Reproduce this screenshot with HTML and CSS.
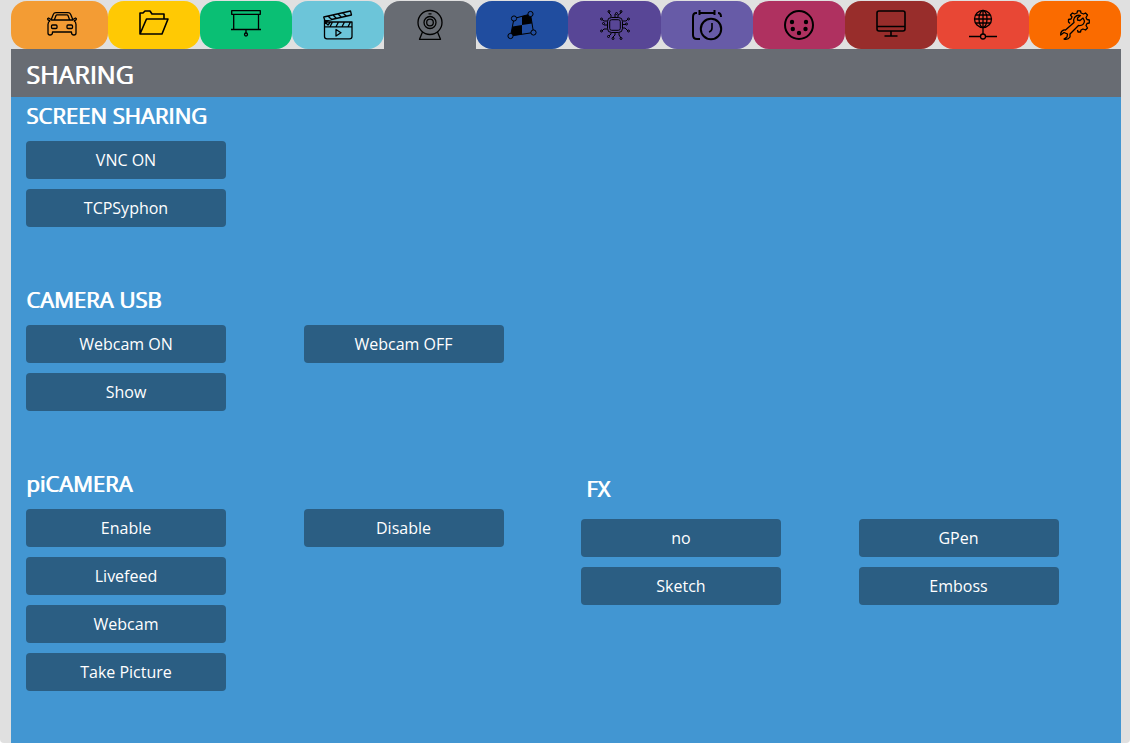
FILE: index.html
```html
<!DOCTYPE html>
<html lang="en">
<head>
<meta charset="utf-8">
<meta name="viewport" content="width=device-width, initial-scale=1">
<title>Sharing</title>
<link rel="stylesheet" href="styles.css">
</head>
<body>
<div class="page">
<nav class="tabs" aria-label="Sections">
<a class="tab tab-first tab-car" href="#car" aria-label="Car"><svg class="icon" viewBox="0 0 30 30"><path d="M4 10L6.500 4Q7 2.700 9 2.700H21Q23 2.700 23.500 4L26 10M7.500 9.500L9 5.500Q9.300 4.800 10 4.800H20Q20.700 4.800 21 5.500L22.500 9.500M4 10H26M4 9.500L1.500 8Q0 8.500 1 9.800L3 10.800Q1 12 1 14.500V23Q1 25 3 25Q5.500 25 5.500 22.500V22H24.500V22.500Q24.500 25 27 25Q29 25 29 23V14.500Q29 12 27 10.800L29 9.800Q30 8.500 28.500 8L26 9.500"/><rect x="4.500" y="15" width="5.500" height="3.500" rx="1"/><rect x="20" y="15" width="5.500" height="3.500" rx="1"/></svg></a>
<a class="tab tab-folder" href="#files" aria-label="Files"><svg class="icon" viewBox="0 0 30 30"><path class="bold" d="M1 24V3H4L6 1H11L13 4H25V9M1 24L7.500 9H29L23 24Z"/></svg></a>
<a class="tab tab-screen" href="#screen" aria-label="Projection"><svg class="icon" viewBox="0 0 30 30"><path d="M.7.700H29.300V4.300H.7ZM2.700 4.300V19.500M27.500 4.300V19.500M0 19.500H30M15 19.500V23"/><circle cx="15" cy="24.500" r="1.500"/></svg></a>
<a class="tab tab-media" href="#media" aria-label="Media"><svg class="icon" viewBox="0 0 30 30"><path d="M.7 7L27.500 1L28.500 5L2 11ZM5 6L8.500 9.500M10 5L13.500 8.500M15 4L18.500 7.300M20 3L23.500 6.200M1.500 10V26.500Q1.500 28.800 4 28.800H26.500Q29 28.800 29 26.500V12H2M1.500 16.800H29M2 12L5 15L7.500 12M9.500 12L7 16.800M15.500 12L13 16.800M21.500 12L19 16.800M27.500 12L25 16.800M13 19.500V26L18 22.700Z"/></svg></a>
<a class="tab tab-sharing" href="#sharing" aria-label="Sharing" aria-current="page"><svg class="icon" viewBox="0 0 30 30"><circle cx="15" cy="12.500" r="12"/><circle cx="15" cy="12.500" r="6"/><circle cx="15" cy="12.500" r="3.300"/><path d="M13.500 3.800H16.500M7.500 22L4.500 29.300H25.500L22.500 22"/></svg></a>
<a class="tab tab-mapping" href="#mapping" aria-label="Mapping"><svg class="icon thin" viewBox="0 0 30 30"><path class="solid" d="M15 6.200L23.500 4L25 13.500L15 15ZM5.500 16.500L15 15V24.500L3.500 26Z"/><path d="M7 8.500L23.500 4L26.500 22.500L3.500 26Z"/><circle class="blue-fill" cx="7" cy="8.500" r="2.600"/><circle class="blue-fill" cx="23.500" cy="4" r="2.600"/><circle class="blue-fill" cx="26.500" cy="22.500" r="2.600"/><circle class="blue-fill" cx="3.500" cy="26" r="2.600"/></svg></a>
<a class="tab tab-chip" href="#processing" aria-label="Processing"><svg class="icon thin" viewBox="0 0 30 30"><rect x="7.500" y="7.500" width="15" height="15" rx="4"/><rect x="9.700" y="9.700" width="10.600" height="10.600" rx="2"/><path d="M11 7.500V5L9 3V1.500M15 7.500V4M18 7.500V5L21 3V1.500M22.500 11H26L28 9M22.500 14.500H26M22.500 18H25L28 21M19 22.500V25L21 28M15 22.500V25L13 27V28M11 22.500V24L9 26M7.500 19H4L2 21M7.500 15H4M7.500 11H4L2 9.500"/><circle cx="9" cy="1.500" r="1"/><circle cx="16.500" cy="3.500" r="1"/><circle cx="21" cy="1.500" r="1"/><circle cx="28.500" cy="9" r="1"/><circle cx="26.500" cy="14" r="1"/><circle cx="28.500" cy="21" r="1"/><circle cx="21" cy="28.500" r="1"/><circle cx="13" cy="28.500" r="1"/><circle cx="8.500" cy="26.500" r="1"/><circle cx="1.500" cy="21" r="1"/><circle cx="3.500" cy="13.500" r="1"/><circle cx="1.500" cy="9" r="1"/></svg></a>
<a class="tab tab-schedule" href="#schedule" aria-label="Schedule"><svg class="icon" viewBox="0 0 30 30"><path class="heavy" d="M5 3H4Q1 3 1 7V25Q1 29 5 29H8M7 3H23M26 3Q29 3 29 7M7.500 0V5M22.500 0V5"/><circle class="heavy" cx="19" cy="19" r="10.200"/><path class="bold" d="M20 13V18Q20 21 17 22"/></svg></a>
<a class="tab tab-midi" href="#midi" aria-label="MIDI"><svg class="icon" viewBox="0 0 30 30"><circle class="heavy" cx="15" cy="15" r="14"/><g class="dots"><circle cx="8" cy="12" r="2.200"/><circle cx="22" cy="12" r="2.200"/><circle cx="8.800" cy="19" r="2.200"/><circle cx="21.500" cy="19" r="2.200"/><circle cx="15" cy="23" r="2.200"/></g></svg></a>
<a class="tab tab-display" href="#display" aria-label="Display"><svg class="icon" viewBox="0 0 30 30"><rect class="bold" x="1" y="1" width="28" height="20" rx="2"/><path class="bold" d="M1 16.500H29M15 21V26M8.500 26H21.500"/></svg></a>
<a class="tab tab-network" href="#network" aria-label="Network"><svg class="icon" viewBox="0 0 30 30"><circle cx="15" cy="9" r="8.500"/><ellipse cx="15" cy="9" rx="4" ry="8.500"/><path d="M15 .5V17.500M6.500 9H23.500M8 5H22M8 13H22M15 17.500V24M1 26.500H12.500M17.500 26.500H29"/><circle cx="15" cy="26.500" r="2.500"/></svg></a>
<a class="tab tab-settings" href="#settings" aria-label="Settings"><svg class="icon" viewBox="0 0 30 30"><path d="M10 13.500L8.500 12V9.500L11 9L12 7L10.500 5L12.500 3L14.500 4L17 3L17.500.8H20.500L21 3L23.500 4L25.500 3L27.500 5L26 7.500L27 9.500L29.300 10V13L27 13.500L26 15.500L27.500 18L25.500 20L23 19L21 20L20.500 22H18L17.500 20"/><path d="M23 8L20 10.500L17.500 10L17.500 8L20.500 5.500Q17 4.500 14.500 7.500Q13 10 14 12.500L5.500 20Q2 19.500.8 23L.7 25L4 22.500L7.500 24L7 27L4 29Q8 30 10 27L10 24L18.500 15.500Q24 16 24.500 11Z"/></svg></a>
</nav>
<main class="panel">
<header class="titlebar"><h1 class="title">SHARING</h1></header>
<section class="section">
<h2 class="heading">SCREEN SHARING</h2>
<div class="columns"><div class="stack"><button class="button" type="button">VNC ON</button><button class="button" type="button">TCPSyphon</button></div></div>
</section>
<section class="section">
<h2 class="heading">CAMERA USB</h2>
<div class="columns"><div class="stack"><button class="button" type="button">Webcam ON</button><button class="button" type="button">Show</button></div><div class="stack"><button class="button" type="button">Webcam OFF</button></div></div>
</section>
<div class="split">
<section class="section">
<h2 class="heading">piCAMERA</h2>
<div class="columns columns-half"><div class="stack"><button class="button" type="button">Enable</button><button class="button" type="button">Livefeed</button><button class="button" type="button">Webcam</button><button class="button" type="button">Take Picture</button></div><div class="stack"><button class="button" type="button">Disable</button></div></div>
</section>
<section class="section">
<h2 class="heading heading-inset">FX</h2>
<div class="columns columns-half"><div class="stack"><button class="button" type="button">no</button><button class="button" type="button">Sketch</button></div><div class="stack"><button class="button" type="button">GPen</button><button class="button" type="button">Emboss</button></div></div>
</section>
</div>
</main>
</div>
</body>
</html>
```
FILE: styles.css
```css
* { box-sizing: border-box; }
body { margin: 0; background: #fff; font-family: "Open Sans", sans-serif; font-size: 16px; color: #fff; }
.page { display: flex; flex-direction: column; min-height: 100vh; padding: 1px 9px 0 11px; background: #e0e0e0; border-radius: 0 0 4px 4px; }
.tabs { display: flex; }
.tab { flex: 1 1 0; display: flex; justify-content: center; align-items: center; height: 48px; border-radius: 16px; }
.tab-first { flex-basis: 5px; padding-left: 5px; }
.icon { width: 30px; height: 30px; fill: none; stroke: #000; stroke-width: 1.3; stroke-linejoin: round; overflow: visible; }
.thin { stroke-width: 1; }
.bold { stroke-width: 1.6; }
.heavy { stroke-width: 2; }
.solid, .dots { fill: #000; }
.solid, .dots { stroke: none; }
.blue-fill { fill: #204d9f; }
.tab-car { background: #f39c34; }
.tab-folder { background: #ffc904; }
.tab-screen { background: #0abf74; }
.tab-media { background: #6cc5d9; }
.tab-sharing { background: #686c73; border-radius: 16px 16px 0 0; }
.tab-mapping { background: #204d9f; }
.tab-chip { background: #584696; }
.tab-schedule { background: #675ba7; }
.tab-midi { background: #af3160; }
.tab-display { background: #982d2b; }
.tab-network { background: #e84735; }
.tab-settings { background: #fa6b00; }
.panel { flex: 1; background: #4296d2; }
.titlebar { padding: 7px 15px 5px; background: #686c73; }
.title, .heading { margin: 0; font-weight: 400; text-shadow: 1px 0 #fff; }
.title { font-size: 25px; line-height: 36px; }
.section { min-height: 184px; }
.heading { padding: 3px 15px 11px; font-size: 22px; line-height: 30px; }
.heading-inset { padding: 8px 20px 16px; }
.columns { display: grid; grid-template-columns: repeat(4, 1fr); }
.columns-half { grid-template-columns: repeat(2, 1fr); }
.stack { display: flex; flex-direction: column; align-items: flex-start; gap: 10px; padding: 0 15px; }
.button { width: 200px; height: 38px; max-width: 100%; padding: 0; border: 0; border-radius: 4px; background: #2b5e83; color: #fff; font: inherit; line-height: 24px; cursor: pointer; }
.split { display: grid; grid-template-columns: 1fr 1fr; }
```
